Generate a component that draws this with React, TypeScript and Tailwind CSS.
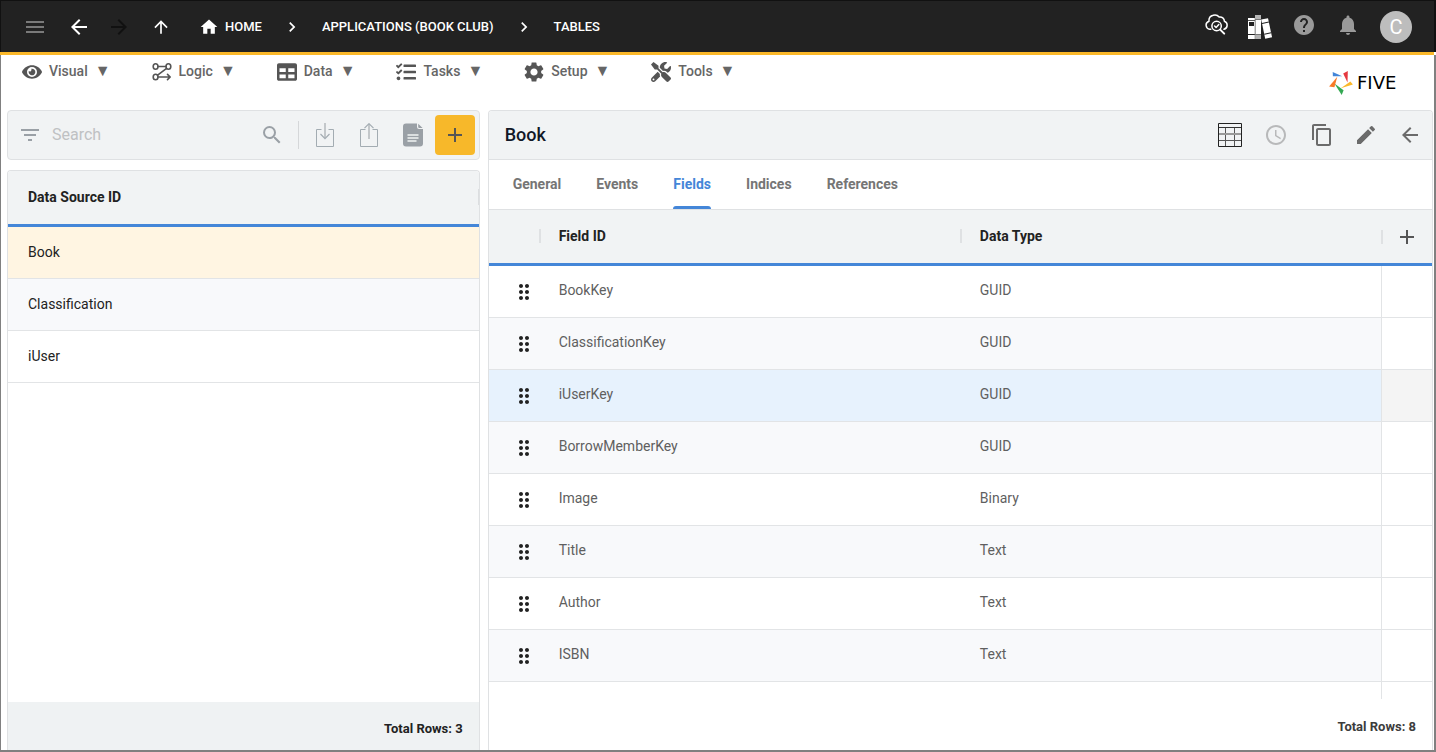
import type { ReactNode } from "react";
import { FaEye, FaTable, FaTasks, FaTools } from "react-icons/fa";
import {
  MdAccessTime,
  MdAdd,
  MdArrowBack,
  MdArrowForward,
  MdArrowUpward,
  MdChevronRight,
  MdContentCopy,
  MdDragIndicator,
  MdEdit,
  MdFilterList,
  MdHelp,
  MdHome,
  MdMenu,
  MdNotifications,
  MdSearch,
  MdSettings,
} from "react-icons/md";

function IconButton({ label, className, children }: { label: string; className: string; children: ReactNode }) {
  return (
    <button type="button" aria-label={label} className={`flex shrink-0 items-center justify-center ${className}`}>
      {children}
    </button>
  );
}

function CloudSearchIcon() {
  return (
    <svg width="24" height="24" viewBox="0 0 24 24" fill="none" stroke="currentColor" strokeWidth="1.5" strokeLinecap="round" strokeLinejoin="round">
      <path d="M6.800 17.200H5.800A4.100 4.100 0 0 1 5 9.200 5.600 5.600 0 0 1 9.200 3.200a5.600 5.600 0 0 1 6 1.800 4.300 4.300 0 0 1 5.200 4.200 4.200 4.200 0 0 1-.400 8" />
      <circle cx="12.600" cy="14" r="4.700" />
      <path d="m10.600 14 1.500 1.500 2.700-2.900" />
      <path d="m16.200 17.600 4 4" strokeWidth="2" />
    </svg>
  );
}

function BooksIcon() {
  return (
    <svg width="26" height="26" viewBox="0 0 26 26">
      <path fill="#fff" d="M1 4h7v21H1z" />
      <path fill="#222" d="M2 8h5v4H2zM1 20h7v1H1zM1 6h7v.7H1z" />
      <path fill="#b5b5b5" d="M8 1h6v24H8z" />
      <path fill="#fff" d="M9 6h5v14H9z" />
      <path fill="#777" d="M8 5h6v1H8zM8 20h6v1H8zM7.700 4h.500v21h-.500z" />
      <g transform="rotate(-12 18 14)">
        <path fill="#fff" d="M16 5h7v19.500h-7z" />
        <path fill="#222" d="M16 8.500h7v1h-7zM16 19.500h7v1h-7z" />
      </g>
    </svg>
  );
}

function LogicIcon() {
  return (
    <svg width="20" height="20" viewBox="0 0 20 20" fill="none" stroke="currentColor" strokeWidth="1.6" strokeLinecap="round" strokeLinejoin="round">
      <ellipse cx="3.600" cy="4.500" rx="2.400" ry="2.700" />
      <ellipse cx="16.400" cy="4.500" rx="2.400" ry="2.700" />
      <ellipse cx="3.600" cy="15" rx="2.400" ry="2.700" />
      <path d="M6 4.500h8M14.600 6.400 5.600 13.200M6 15h12M15.500 12.400 18.200 15l-2.700 2.600" />
    </svg>
  );
}

function TrayIcon({ arrow }: { arrow: "down" | "up" }) {
  return (
    <svg width="24" height="24" viewBox="0 0 24 24" fill="none">
      <path stroke="#a3acb2" d="M8.500 6.500h-5v17h17v-17h-5" />
      <path stroke="#c3c7ca" strokeWidth="2" d={arrow === "down" ? "M12 0v15" : "M12 1v15"} />
      <path stroke="#a3acb2" strokeWidth="1.200" d={arrow === "down" ? "M7.500 11 12 15.600l4.500-4.600" : "M7.500 5.200 12 .700l4.500 4.500"} />
    </svg>
  );
}

function DocumentIcon() {
  return (
    <svg width="20" height="24" viewBox="0 0 20 24">
      <path fill="#9aa0a6" d="M3 .5h11V4a2 2 0 0 0 2 2h4v14.500a3 3 0 0 1-3 3H3a3 3 0 0 1-3-3v-17a3 3 0 0 1 3-3z" />
      <path fill="#9aa0a6" d="M15.200.8 19.600 5h-3.400a1 1 0 0 1-1-1z" />
      <path stroke="#f1f3f4" strokeWidth="1.300" d="M4.500 12h11M4.500 15h11M4.500 18h9" />
    </svg>
  );
}

function GridIcon() {
  return (
    <svg width="24" height="24" viewBox="0 0 24 24" fill="none">
      <path stroke="#555" d="M7.500 5v18M16.500 5v18M1 17.500h22" />
      <path stroke="#999" strokeWidth="2" d="M1 11h22" />
      <path stroke="#333" d="M1 4.500h22" />
      <path stroke="#222" d="M.5.5h23v23H.5z" />
    </svg>
  );
}

function LogoMark() {
  return (
    <svg width="24" height="24" viewBox="0 0 24 24">
      <path fill="#4285d8" d="M3.700 1 13.200 5.200 3.900 5.200z" />
      <path fill="#e53940" d="M14.200 2.600 18.800 0 18.500 11.600z" />
      <path fill="#fbb829" d="M11.800 17.200 21.400 10.600 23.900 13.400z" />
      <path fill="#34a853" d="M5.400 12.600 14.600 19.200 12.700 23.900z" />
      <path fill="#f97a28" d="M8.300 5.800 5.400 16.200.100 15.600z" />
    </svg>
  );
}

const menus = [
  { name: "Visual", icon: <FaEye size={20} /> },
  { name: "Logic", icon: <LogicIcon /> },
  { name: "Data", icon: <FaTable size={20} /> },
  { name: "Tasks", icon: <FaTasks size={20} /> },
  { name: "Setup", icon: <MdSettings size={24} className="-mx-0.5" /> },
  { name: "Tools", icon: <FaTools size={20} /> },
];

const sources = ["Book", "Classification", "iUser"];
const tabs = ["General", "Events", "Fields", "Indices", "References"];
const fields = [
  ["BookKey", "GUID"],
  ["ClassificationKey", "GUID"],
  ["iUserKey", "GUID"],
  ["BorrowMemberKey", "GUID"],
  ["Image", "Binary"],
  ["Title", "Text"],
  ["Author", "Text"],
  ["ISBN", "Text"],
];

function TopBar() {
  return (
    <header className="flex h-[52px] items-center border-t border-r-2 border-l border-black/50 bg-[#222] pr-[22px] pl-3 text-white">
      <IconButton label="Menu" className="h-11 w-11 text-[#7a7a7a]"><MdMenu size={24} /></IconButton>
      <IconButton label="Back" className="h-11 w-11"><MdArrowBack size={24} /></IconButton>
      <IconButton label="Forward" className="h-11 w-9 text-[#111]"><MdArrowForward size={24} /></IconButton>
      <IconButton label="Up" className="h-11 w-12"><MdArrowUpward size={20} /></IconButton>
      <nav aria-label="Breadcrumb" className="flex items-center text-[13px] font-medium">
        <a href="#home" className="ml-3.5 flex items-center gap-1.5"><MdHome size={20} />HOME</a>
        <MdChevronRight size={20} className="mx-5" />
        <a href="#applications">APPLICATIONS (BOOK CLUB)</a>
        <MdChevronRight size={20} className="mx-5" />
        <a href="#tables">TABLES</a>
      </nav>
      <div className="ml-auto flex items-center">
        <IconButton label="Inspect cloud" className="h-11 w-11 pb-1.5"><CloudSearchIcon /></IconButton>
        <IconButton label="Library" className="h-11 w-11"><BooksIcon /></IconButton>
        <IconButton label="Help" className="h-11 w-11 pb-1 text-[#9a9a9a]"><MdHelp size={24} /></IconButton>
        <IconButton label="Notifications" className="h-11 w-11 pb-1 text-[#9a9a9a]"><MdNotifications size={24} /></IconButton>
        <button type="button" className="ml-2.5 h-8 w-8 rounded-full bg-[#bdbdbd] text-xl leading-8">C</button>
      </div>
    </header>
  );
}

function MenuBar() {
  return (
    <div className="flex h-[55px] items-start justify-between pr-[11px] pl-[21px]">
      <nav aria-label="Main" className="flex gap-[41px] pt-1">
        {menus.map((m) => (
          <button key={m.name} type="button" className="flex h-6 items-center gap-[7px] text-sm font-medium text-[#666]">
            <span className="flex h-full items-center pt-0.5 text-[#555]">{m.icon}</span>
            <span>{m.name}</span>
            <span className="text-base leading-6">▼</span>
          </button>
        ))}
      </nav>
      <div className="flex w-[94px] items-center gap-1 pt-4 text-black">
        <LogoMark />
        <span className="font-['DejaVu_Sans'] text-lg leading-6">FIVE</span>
      </div>
    </div>
  );
}

function SourcePanel() {
  return (
    <div className="flex min-w-0 flex-col gap-2.5">
      <div className="flex h-[50px] items-center rounded border border-[#dfe1e3] bg-[#f1f3f4] pr-1 pl-2.5 text-[#9aa0a6]">
        <IconButton label="Filter" className="h-6 w-6"><MdFilterList size={24} /></IconButton>
        <input
          type="search"
          aria-label="Search"
          placeholder="Search"
          className="ml-2.5 min-w-0 flex-1 bg-transparent text-base text-gray-700 outline-none placeholder:text-[#bfc1c3]"
        />
        <IconButton label="Run search" className="h-6 w-6"><MdSearch size={24} /></IconButton>
        <div className="mr-1 ml-3.5 h-7 w-px bg-[#d5d7d9]" />
        <IconButton label="Import" className="h-10 w-11"><TrayIcon arrow="down" /></IconButton>
        <IconButton label="Export" className="h-10 w-11"><TrayIcon arrow="up" /></IconButton>
        <IconButton label="Report" className="h-10 w-11"><DocumentIcon /></IconButton>
        <IconButton label="Add table" className="h-10 w-10 rounded bg-[#f7b82a] text-[#555]"><MdAdd size={24} /></IconButton>
      </div>
      <div className="flex flex-1 flex-col overflow-hidden rounded-t border border-b-0 border-[#dfe1e3]">
        <table className="w-full border-separate border-spacing-0 text-left text-sm text-[#222]">
          <thead>
            <tr className="h-14 bg-[#f1f3f4]">
              <th className="border-b-3 border-[#4486d8] p-0 pb-0.5 pl-5 font-bold">
                <div className="flex items-center justify-between">Data Source ID<span className="h-4 w-px bg-[#dcdee0]" /></div>
              </th>
            </tr>
          </thead>
          <tbody>
            {sources.map((s) => (
              <tr key={s} className="h-[52px] first:bg-[#fff5e2] even:bg-[#f8f9fb]">
                <td className="border-b border-[#e2e4e6] p-0 pb-0.5 pl-5">{s}</td>
              </tr>
            ))}
          </tbody>
        </table>
        <div className="mt-auto flex h-12 items-center justify-end bg-[#eff2f3] pt-1.5 pr-4 text-[13px] font-bold text-[#222]">Total Rows: 3</div>
      </div>
    </div>
  );
}

function FieldsTable() {
  return (
    <table className="w-full table-fixed border-separate border-spacing-0 text-left text-sm text-[#5f5f5f]">
      <colgroup>
        <col className="w-[50px]" />
        <col />
        <col />
        <col className="w-[51px]" />
      </colgroup>
      <thead>
        <tr className="h-14 bg-[#f1f3f4] text-[#222] [&>th]:border-b-3 [&>th]:border-[#4486d8]">
          <th aria-label="Order" className="p-0" />
          <th className="p-0 pb-0.5 font-bold">
            <div className="flex items-center gap-[18px]"><span className="h-3.5 w-0.5 bg-[#dfe1e3]" />Field ID</div>
          </th>
          <th className="p-0 pb-0.5 font-bold">
            <div className="flex items-center gap-[18px]"><span className="h-3.5 w-0.5 bg-[#dfe1e3]" />Data Type</div>
          </th>
          <th className="p-0">
            <div className="flex items-center gap-3">
              <span className="h-3.5 w-0.5 bg-[#dfe1e3]" />
              <IconButton label="Add field" className="h-6 w-6 text-[#555]"><MdAdd size={24} /></IconButton>
            </div>
          </th>
        </tr>
      </thead>
      <tbody>
        {fields.map(([id, type]) => {
          const active = id === "iUserKey";
          return (
            <tr key={id} className={`h-[52px] [&>td]:border-b [&>td]:border-[#e2e4e6] ${active ? "bg-[#e7f2fd]" : "even:bg-[#f8f9fb]"}`}>
              <td className="p-0">
                <IconButton label={`Move ${id}`} className="ml-[23px] h-6 w-6 text-[#222]"><MdDragIndicator size={24} /></IconButton>
              </td>
              <td className="p-0 pb-1 pl-5">{id}</td>
              <td className="p-0 pb-1 pl-5">{type}</td>
              <td className={`border-l p-0 ${active ? "bg-[#f4f4f4]" : "bg-white"}`} />
            </tr>
          );
        })}
      </tbody>
    </table>
  );
}

function DetailPanel() {
  return (
    <div className="flex min-w-0 flex-col overflow-hidden rounded-t border border-b-0 border-[#dfe1e3]">
      <div className="flex h-[49px] items-center border-b border-[#dfe1e3] bg-[#f1f3f4] pl-4 text-[#6b6b6b]">
        <h1 className="flex-1 text-lg font-medium text-[#111827]">Book</h1>
        <IconButton label="Show data" className="h-11 w-11"><GridIcon /></IconButton>
        <IconButton label="History" className="h-11 w-12 text-[#b8b9ba]"><MdAccessTime size={24} /></IconButton>
        <IconButton label="Copy" className="h-11 w-11"><MdContentCopy size={24} /></IconButton>
        <IconButton label="Edit" className="h-11 w-11"><MdEdit size={24} /></IconButton>
        <IconButton label="Close" className="h-11 w-11"><MdArrowBack size={24} /></IconButton>
      </div>
      <div role="tablist" className="flex h-[50px] gap-[35px] border-b border-[#dfe1e3] pl-6 text-sm font-bold text-[#757575]">
        {tabs.map((t) => (
          <button
            key={t}
            type="button"
            role="tab"
            aria-selected={t === "Fields"}
            className="flex flex-col justify-between pt-3.5 aria-selected:text-[#4486d8]"
          >
            {t}
            {t === "Fields" && <span className="h-[3px] w-full rounded-t-sm bg-[#4486d8]" />}
          </button>
        ))}
      </div>
      <FieldsTable />
      <div className="flex flex-1 justify-end">
        <div className="w-[51px] border-l border-[#e2e4e6]" />
      </div>
      <div className="flex h-[51px] items-center justify-end pt-1 pr-4 text-[13px] font-bold text-[#3c3c3c]">Total Rows: 8</div>
    </div>
  );
}

export default function App() {
  return (
    <div className="flex min-h-screen flex-col bg-white font-[Roboto,sans-serif]">
      <TopBar />
      <div className="mr-0.5 h-[3px] bg-[#fbb829]" />
      <main className="flex flex-1 flex-col border-r-2 border-b-2 border-l border-[#808080]">
        <MenuBar />
        <div className="grid flex-1 grid-cols-[1fr_2fr] gap-2 pr-px pl-1.5">
          <SourcePanel />
          <DetailPanel />
        </div>
      </main>
    </div>
  );
}
